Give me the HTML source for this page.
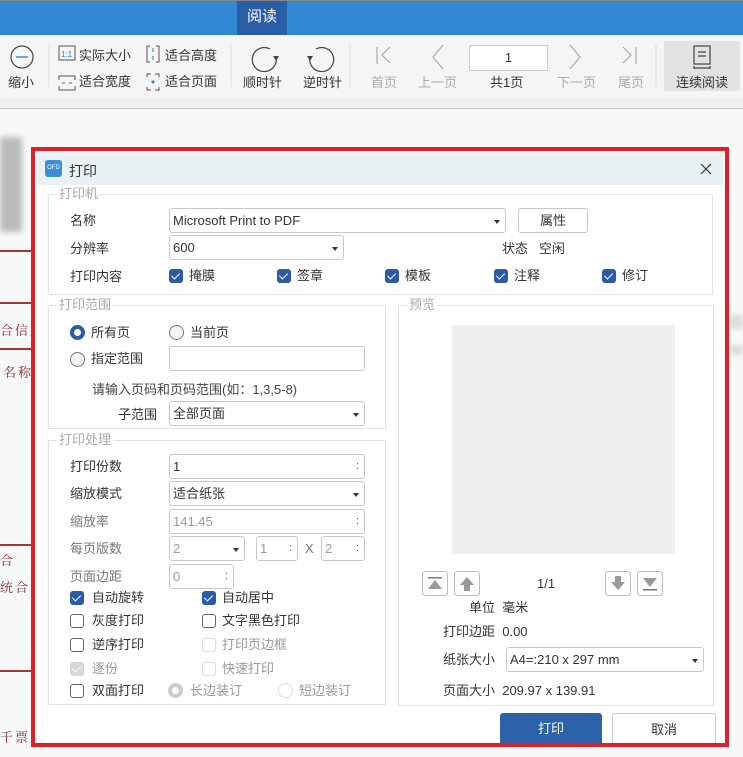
<!DOCTYPE html>
<html><head><meta charset="utf-8"><style>
*{margin:0;padding:0;box-sizing:border-box}
body{width:743px;height:757px;overflow:hidden;background:#f7f8fa;font-family:"Liberation Sans","Noto Sans CJK SC",sans-serif;font-size:13px;color:#333;position:relative}
.a{position:absolute;white-space:nowrap}
.tb{font-size:13px;color:#333}
.dis{color:#aaa}
.box{position:absolute;border:1px solid #e3e3e3}
.lg{position:absolute;background:#fff;color:#aaa;font-size:13px;padding:0 2px;line-height:14px}
.in{position:absolute;border:1px solid #c8c8c8;border-radius:3px;background:#fff;height:25px;line-height:23px;padding-left:3px;font-size:13px;color:#333}
.in.g{color:#999}
.sel::after{content:"";position:absolute;right:5px;top:11px;border:3px solid transparent;border-top:4px solid #333}
.sp::after{content:":";position:absolute;right:5px;top:0;color:#666;font-size:11px}
.cb{position:absolute;width:14px;height:14px;border-radius:3px;background:#2a5aa8}
.cb::after{content:"";position:absolute;left:4px;top:2px;width:4px;height:7px;border:solid #fff;border-width:0 1px 1px 0;transform:rotate(45deg)}
.cu{position:absolute;width:14px;height:14px;border-radius:3px;border:1px solid #666;background:#fff}
.cd{position:absolute;width:14px;height:14px;border-radius:3px;border:1px solid #ddd;background:#fff}
.rd{position:absolute;width:15px;height:15px;border-radius:50%;border:1px solid #777;background:#f4f4f4}
.lb{position:absolute;white-space:nowrap;font-size:13px;line-height:16px;color:#333}
.red{position:absolute;left:0;width:31px;height:2px;background:#a33}
.rt{position:absolute;left:0;color:#8b2a2a;font-family:"Noto Serif CJK SC",serif;font-size:13px;letter-spacing:2px}
</style></head><body>
<div class="a" style="left:0;top:0;width:743px;height:35px;background:#3187d2;border-top:1px solid #888"></div>
<div class="a" style="left:237px;top:1px;width:50px;height:34px;background:#2a5ea6;color:#fff;font-size:15px;text-align:center;line-height:32px">阅读</div>
<div class="a" style="left:0;top:35px;width:743px;height:62px;background:#f5f5f5"></div>
<div class="a" style="left:0;top:97px;width:743px;height:12px;background:#f0f0f0;border-bottom:1px solid #ccc"></div>
<svg class="a" style="left:0;top:35px" width="743" height="62">
<circle cx="22" cy="22" r="11" fill="none" stroke="#444" stroke-width="1.2"/><line x1="16" y1="22" x2="28" y2="22" stroke="#2a7ad0" stroke-width="1.3"/>
<line x1="49" y1="10" x2="49" y2="52" stroke="#ddd"/>
<rect x="59" y="11" width="16" height="14" fill="none" stroke="#555"/><text x="61" y="22" font-size="8" fill="#2a7ad0">1:1</text>
<path d="M59 45v-4h16v4M59 51v4h16v-4" fill="none" stroke="#555"/><path d="M62 48h3M72 48h-3" stroke="#2a7ad0"/>
<path d="M150 11h-3v16h3M156 11h3v16h-3" fill="none" stroke="#555"/><path d="M153 13v4M153 25v-4" stroke="#2a7ad0"/>
<path d="M147 42v-3h4M155 39h4v3M147 52v3h4M155 55h4v-3" fill="none" stroke="#555"/><circle cx="153" cy="47" r="1.5" fill="#2a7ad0"/>
<line x1="231" y1="10" x2="231" y2="52" stroke="#ddd"/>
<path d="M270 14a12 12 0 1 0 6 8" fill="none" stroke="#444" stroke-width="1.2"/><path d="M273 21l3 5 3-5z" fill="#444"/>
<path d="M316 14a12 12 0 1 1 -6 8" fill="none" stroke="#444" stroke-width="1.2"/><path d="M313 21l-3 5-3-5z" fill="#444"/>
<line x1="350" y1="10" x2="350" y2="52" stroke="#ddd"/>
<path d="M377 12v17M390 12l-8 8 8 8" fill="none" stroke="#aaa" stroke-width="1.2"/>
<path d="M443 10l-10 12 10 12" fill="none" stroke="#aaa" stroke-width="1.2"/>
<path d="M570 10l10 12-10 12" fill="none" stroke="#aaa" stroke-width="1.2"/>
<path d="M623 12l8 8-8 8M636 12v17" fill="none" stroke="#aaa" stroke-width="1.2"/>
<line x1="656" y1="10" x2="656" y2="52" stroke="#ddd"/>
<rect x="664" y="6" width="76" height="50" fill="#e2e2e2" rx="2"/>
<rect x="694" y="11" width="16" height="18" fill="none" stroke="#444" stroke-width="1.2"/><path d="M698 17h8M698 21h8M694 33h16M694 31v3M710 31v3" stroke="#444" stroke-width="1.2" fill="none"/>
</svg>
<div class="a tb" style="left:8px;top:72px">缩小</div>
<div class="a tb" style="left:79px;top:45px">实际大小</div>
<div class="a tb" style="left:79px;top:71px">适合宽度</div>
<div class="a tb" style="left:165px;top:45px">适合高度</div>
<div class="a tb" style="left:165px;top:71px">适合页面</div>
<div class="a tb" style="left:243px;top:72px">顺时针</div>
<div class="a tb" style="left:303px;top:72px">逆时针</div>
<div class="a tb dis" style="left:371px;top:72px">首页</div>
<div class="a tb dis" style="left:418px;top:72px">上一页</div>
<div class="a" style="left:469px;top:45px;width:79px;height:26px;background:#fff;border:1px solid #ccc;text-align:center;line-height:24px;font-size:13px">1</div>
<div class="a tb" style="left:490px;top:72px">共1页</div>
<div class="a tb dis" style="left:557px;top:72px">下一页</div>
<div class="a tb dis" style="left:618px;top:72px">尾页</div>
<div class="a tb" style="left:676px;top:72px">连续阅读</div>
<div class="a" style="left:0;top:137px;width:22px;height:95px;background:#888;opacity:.55;filter:blur(3px)"></div>
<div class="red" style="top:250px"></div><div class="red" style="top:302px"></div><div class="red" style="top:348px"></div><div class="red" style="top:544px"></div><div class="red" style="top:670px"></div>
<div class="rt" style="top:320px">合信用</div>
<div class="rt" style="top:362px;left:3px">名称</div>
<div class="rt" style="top:550px">合</div>
<div class="rt" style="top:577px">统合计</div>
<div class="rt" style="top:727px">千票人</div>
<div class="a" style="left:729px;top:315px;width:14px;height:14px;background:#ddd;filter:blur(2px)"></div>
<div class="a" style="left:729px;top:345px;width:14px;height:10px;background:#ddd;filter:blur(2px)"></div>
<div class="a" style="left:31px;top:147px;width:698px;height:600px;border:4px solid #e41e26"></div>
<div class="a" style="left:35px;top:151px;width:690px;height:592px;background:#fff"></div>
<div class="a" style="left:37px;top:153px;width:686px;height:32px;background:#e9f1f5"></div>
<div class="a" style="left:45px;top:160px;width:17px;height:17px;background:#3b8fd6;border-radius:3px;color:#fff;font-size:6px;line-height:17px;text-align:center">OFD</div>
<div class="a" style="left:69px;top:161px;font-size:14px">打印</div>
<svg class="a" style="left:700px;top:163px" width="12" height="12"><path d="M1 1L11 11M11 1L1 11" stroke="#333" stroke-width="1.2"/></svg>

<div class="box" style="left:48px;top:194px;width:665px;height:101px"></div><div class="lg" style="left:57px;top:187px">打印机</div>
<div class="box" style="left:48px;top:305px;width:338px;height:124px"></div><div class="lg" style="left:57px;top:298px">打印范围</div>
<div class="box" style="left:398px;top:305px;width:316px;height:401px"></div><div class="lg" style="left:407px;top:298px">预览</div>
<div class="box" style="left:48px;top:440px;width:338px;height:265px"></div><div class="lg" style="left:57px;top:433px">打印处理</div>

<div class="lb" style="left:70px;top:213px">名称</div>
<div class="in sel" style="left:169px;top:208px;width:337px">Microsoft Print to PDF</div>
<div class="in" style="left:518px;top:208px;width:70px;text-align:center;padding:0">属性</div>
<div class="lb" style="left:70px;top:241px">分辨率</div>
<div class="in sel" style="left:169px;top:235px;width:175px">600</div>
<div class="lb" style="left:502px;top:241px">状态&nbsp;&nbsp;&nbsp;空闲</div>
<div class="lb" style="left:70px;top:269px">打印内容</div>
<div class="cb" style="left:169px;top:269px"></div><div class="lb" style="left:189px;top:268px">掩膜</div>
<div class="cb" style="left:277px;top:269px"></div><div class="lb" style="left:297px;top:268px">签章</div>
<div class="cb" style="left:385px;top:269px"></div><div class="lb" style="left:405px;top:268px">模板</div>
<div class="cb" style="left:494px;top:269px"></div><div class="lb" style="left:514px;top:268px">注释</div>
<div class="cb" style="left:602px;top:269px"></div><div class="lb" style="left:622px;top:268px">修订</div>

<div class="rd" style="left:70px;top:325px;border:4px solid #2a5aa8;background:#fff"></div><div class="lb" style="left:91px;top:325px">所有页</div>
<div class="rd" style="left:169px;top:325px"></div><div class="lb" style="left:190px;top:325px">当前页</div>
<div class="rd" style="left:70px;top:352px"></div><div class="lb" style="left:91px;top:351px">指定范围</div>
<div class="in" style="left:169px;top:346px;width:196px"></div>
<div class="lb" style="left:92px;top:382px;color:#444">请输入页码和页码范围(如：1,3,5-8)</div>
<div class="lb" style="left:118px;top:407px">子范围</div>
<div class="in sel" style="left:169px;top:401px;width:196px">全部页面</div>

<div class="lb" style="left:70px;top:459px">打印份数</div><div class="in sp" style="left:169px;top:454px;width:196px">1</div>
<div class="lb" style="left:70px;top:486px">缩放模式</div><div class="in sel" style="left:169px;top:481px;width:196px">适合纸张</div>
<div class="lb" style="left:70px;top:514px;color:#777">缩放率</div><div class="in sp g" style="left:169px;top:509px;width:196px">141.45</div>
<div class="lb" style="left:70px;top:541px;color:#777">每页版数</div><div class="in sel g" style="left:169px;top:536px;width:76px">2</div>
<div class="in sp g" style="left:256px;top:536px;width:42px">1</div><div class="lb" style="left:305px;top:541px;color:#777">X</div><div class="in sp g" style="left:321px;top:536px;width:44px">2</div>
<div class="lb" style="left:70px;top:569px;color:#777">页面边距</div><div class="in sp g" style="left:169px;top:564px;width:65px">0</div>

<div class="cb" style="left:70px;top:591px"></div><div class="lb" style="left:92px;top:590px">自动旋转</div>
<div class="cb" style="left:202px;top:591px"></div><div class="lb" style="left:222px;top:590px">自动居中</div>
<div class="cu" style="left:70px;top:614px"></div><div class="lb" style="left:92px;top:613px">灰度打印</div>
<div class="cu" style="left:202px;top:614px"></div><div class="lb" style="left:222px;top:613px">文字黑色打印</div>
<div class="cu" style="left:70px;top:638px"></div><div class="lb" style="left:92px;top:637px">逆序打印</div>
<div class="cd" style="left:202px;top:638px"></div><div class="lb" style="left:222px;top:637px;color:#999">打印页边框</div>
<div class="cb" style="left:70px;top:662px;background:#d6d6d6"></div><div class="lb" style="left:92px;top:661px;color:#999">逐份</div>
<div class="cd" style="left:202px;top:662px"></div><div class="lb" style="left:222px;top:661px;color:#999">快速打印</div>
<div class="cu" style="left:70px;top:684px"></div><div class="lb" style="left:92px;top:683px">双面打印</div>
<div class="rd" style="left:168px;top:683px;border:4px solid #ccc;background:#fff"></div><div class="lb" style="left:190px;top:683px;color:#999">长边装订</div>
<div class="rd" style="left:278px;top:683px;border-color:#ddd;background:#fff"></div><div class="lb" style="left:299px;top:683px;color:#999">短边装订</div>

<div class="a" style="left:452px;top:325px;width:223px;height:229px;background:#efefef"></div>
<svg class="a" style="left:420px;top:570px" width="250" height="28">
<rect x="2.5" y="1.5" width="25" height="24" rx="3" fill="#fff" stroke="#bbb"/><rect x="8" y="7" width="14" height="1.5" fill="#777"/><path d="M8 19h14l-7-9z" fill="#999"/>
<rect x="34.5" y="1.5" width="25" height="24" rx="3" fill="#fff" stroke="#bbb"/><path d="M40 15l7-8 7 8h-4v6h-6v-6z" fill="#999"/>
<rect x="185.5" y="1.5" width="25" height="24" rx="3" fill="#fff" stroke="#bbb"/><path d="M191 12l7 8 7-8h-4v-6h-6v6z" fill="#999"/>
<rect x="217.5" y="1.5" width="25" height="24" rx="3" fill="#fff" stroke="#bbb"/><path d="M223 8h14l-7 9z" fill="#999"/><rect x="223" y="19" width="14" height="1.5" fill="#777"/>
</svg>
<div class="lb" style="left:537px;top:576px">1/1</div>
<div class="lb" style="left:469px;top:600px">单位&nbsp;&nbsp;毫米</div>
<div class="lb" style="left:443px;top:624px">打印边距&nbsp;&nbsp;0.00</div>
<div class="lb" style="left:443px;top:652px">纸张大小</div>
<div class="in sel" style="left:506px;top:647px;width:198px">A4=:210 x 297 mm</div>
<div class="lb" style="left:443px;top:683px">页面大小&nbsp;&nbsp;209.97 x 139.91</div>

<div class="a" style="left:500px;top:713px;width:102px;height:30px;background:#2b62a8;border-radius:3px 3px 0 0;color:#fff;text-align:center;line-height:32px;font-size:13px">打印</div>
<div class="a" style="left:612px;top:713px;width:104px;height:30px;border:1px solid #ccc;border-bottom:none;border-radius:3px 3px 0 0;text-align:center;line-height:32px;font-size:13px">取消</div>
</body></html>
